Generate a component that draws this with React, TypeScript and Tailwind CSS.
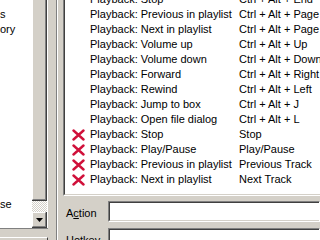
import React from "react";

type Row = { action: string; key: string; missing?: boolean };

const rows: Row[] = [
  { action: "Playback: Stop", key: "Ctrl + Alt + End" },
  { action: "Playback: Previous in playlist", key: "Ctrl + Alt + Page Up" },
  { action: "Playback: Next in playlist", key: "Ctrl + Alt + Page Down" },
  { action: "Playback: Volume up", key: "Ctrl + Alt + Up" },
  { action: "Playback: Volume down", key: "Ctrl + Alt + Down" },
  { action: "Playback: Forward", key: "Ctrl + Alt + Right" },
  { action: "Playback: Rewind", key: "Ctrl + Alt + Left" },
  { action: "Playback: Jump to box", key: "Ctrl + Alt + J" },
  { action: "Playback: Open file dialog", key: "Ctrl + Alt + L" },
  { action: "Playback: Stop", key: "Stop", missing: true },
  { action: "Playback: Play/Pause", key: "Play/Pause", missing: true },
  { action: "Playback: Previous in playlist", key: "Previous Track", missing: true },
  { action: "Playback: Next in playlist", key: "Next Track", missing: true },
];

function CrossIcon() {
  return (
    <svg width="13" height="12" viewBox="0 0 13 12">
      <path d="M1.5 1.5 L11.5 10.5 M11.5 1.5 L1.5 10.5" stroke="#d0103a" strokeWidth="2.4" strokeLinecap="round" fill="none" />
    </svg>
  );
}

function Field({ label, hot }: { label: React.ReactNode; hot?: boolean }) {
  return (
    <div className="flex h-[21px] shrink-0">
      <div className="w-[45px] shrink-0 pl-[3px] mt-[5px] leading-[15px] whitespace-nowrap">{label}</div>
      <div className="flex-1 flex border-t border-l border-[#808080] border-b-white border-r-white border-b border-r">
        <div className={"flex-1 border-t border-l border-[#404040] bg-white " + (hot ? "" : "border-b border-b-[#d4d0c8]")} />
      </div>
    </div>
  );
}

export default function App() {
  return (
    <div className="w-[320px] h-[240px] overflow-hidden flex bg-[#d4d0c8] text-black text-[11px] font-['Liberation_Sans',Arial,sans-serif]">
      {/* left tree */}
      <div className="w-[48px] shrink-0 flex flex-col">
        <div className="h-[228px] flex border-r border-white shrink-0">
          <div className="w-[32px] bg-white flex flex-col leading-[15px] pt-[7px] pb-[16px] overflow-hidden">
            <div>s</div>
            <div>ory</div>
            <div className="mt-auto">se</div>
          </div>
          <div className="w-[15px] flex flex-col">
            <div className="flex-1 flex border-r border-b border-[#404040]">
              <div className="flex-1 border-l border-white border-r border-b border-r-[#808080] border-b-[#808080] bg-[#d4d0c8]" />
            </div>
            <div className="h-[11px] bg-[repeating-conic-gradient(#d4d0c8_0%_25%,#ffffff_0%_50%)] bg-[length:2px_2px]" />
            <div className="h-[16px] flex border-r border-b border-[#404040]">
              <div className="flex-1 flex items-center justify-center border-t border-l border-white border-r border-b border-r-[#808080] border-b-[#808080]">
                <svg width="7" height="4" viewBox="0 0 7 4">
                  <path d="M0 0 H7 L3.5 4 Z" fill="#000" />
                </svg>
              </div>
            </div>
          </div>
        </div>
        <div className="h-px bg-[#808080] shrink-0" />
        <div className="h-[8px] shrink-0" />
        <div className="flex-1 border-t border-white border-r border-r-[#404040]" />
      </div>

      {/* splitter */}
      <div className="w-[15px] shrink-0 flex">
        <div className="w-[8px]" />
        <div className="w-px bg-[#808080]" />
        <div className="w-px bg-white" />
        <div className="flex-1" />
      </div>

      {/* right panel */}
      <div className="flex-1 min-w-0 flex flex-col">
        <div className="h-[196px] shrink-0 flex border-l border-[#808080] border-b border-b-white">
          <div className="flex-1 border-l border-[#404040] border-b border-b-[#d4d0c8] bg-white overflow-hidden">
            <div className="-mt-[8px]">
              {rows.map((r, i) => (
                <div key={i} className="flex items-center h-[15px] leading-[15px] whitespace-nowrap">
                  <div className="w-[25px] shrink-0 pl-[7px] flex items-center">{r.missing && <CrossIcon />}</div>
                  <div className="w-[149px] shrink-0 overflow-hidden">{r.action}</div>
                  <div>{r.key}</div>
                </div>
              ))}
            </div>
          </div>
        </div>
        <div className="h-[5px] shrink-0" />
        <Field
          label={
            <>
              A<span className="underline">c</span>tion
            </>
          }
        />
        <div className="h-[6px] shrink-0" />
        <Field label="Hotkey" hot />
      </div>
    </div>
  );
}
